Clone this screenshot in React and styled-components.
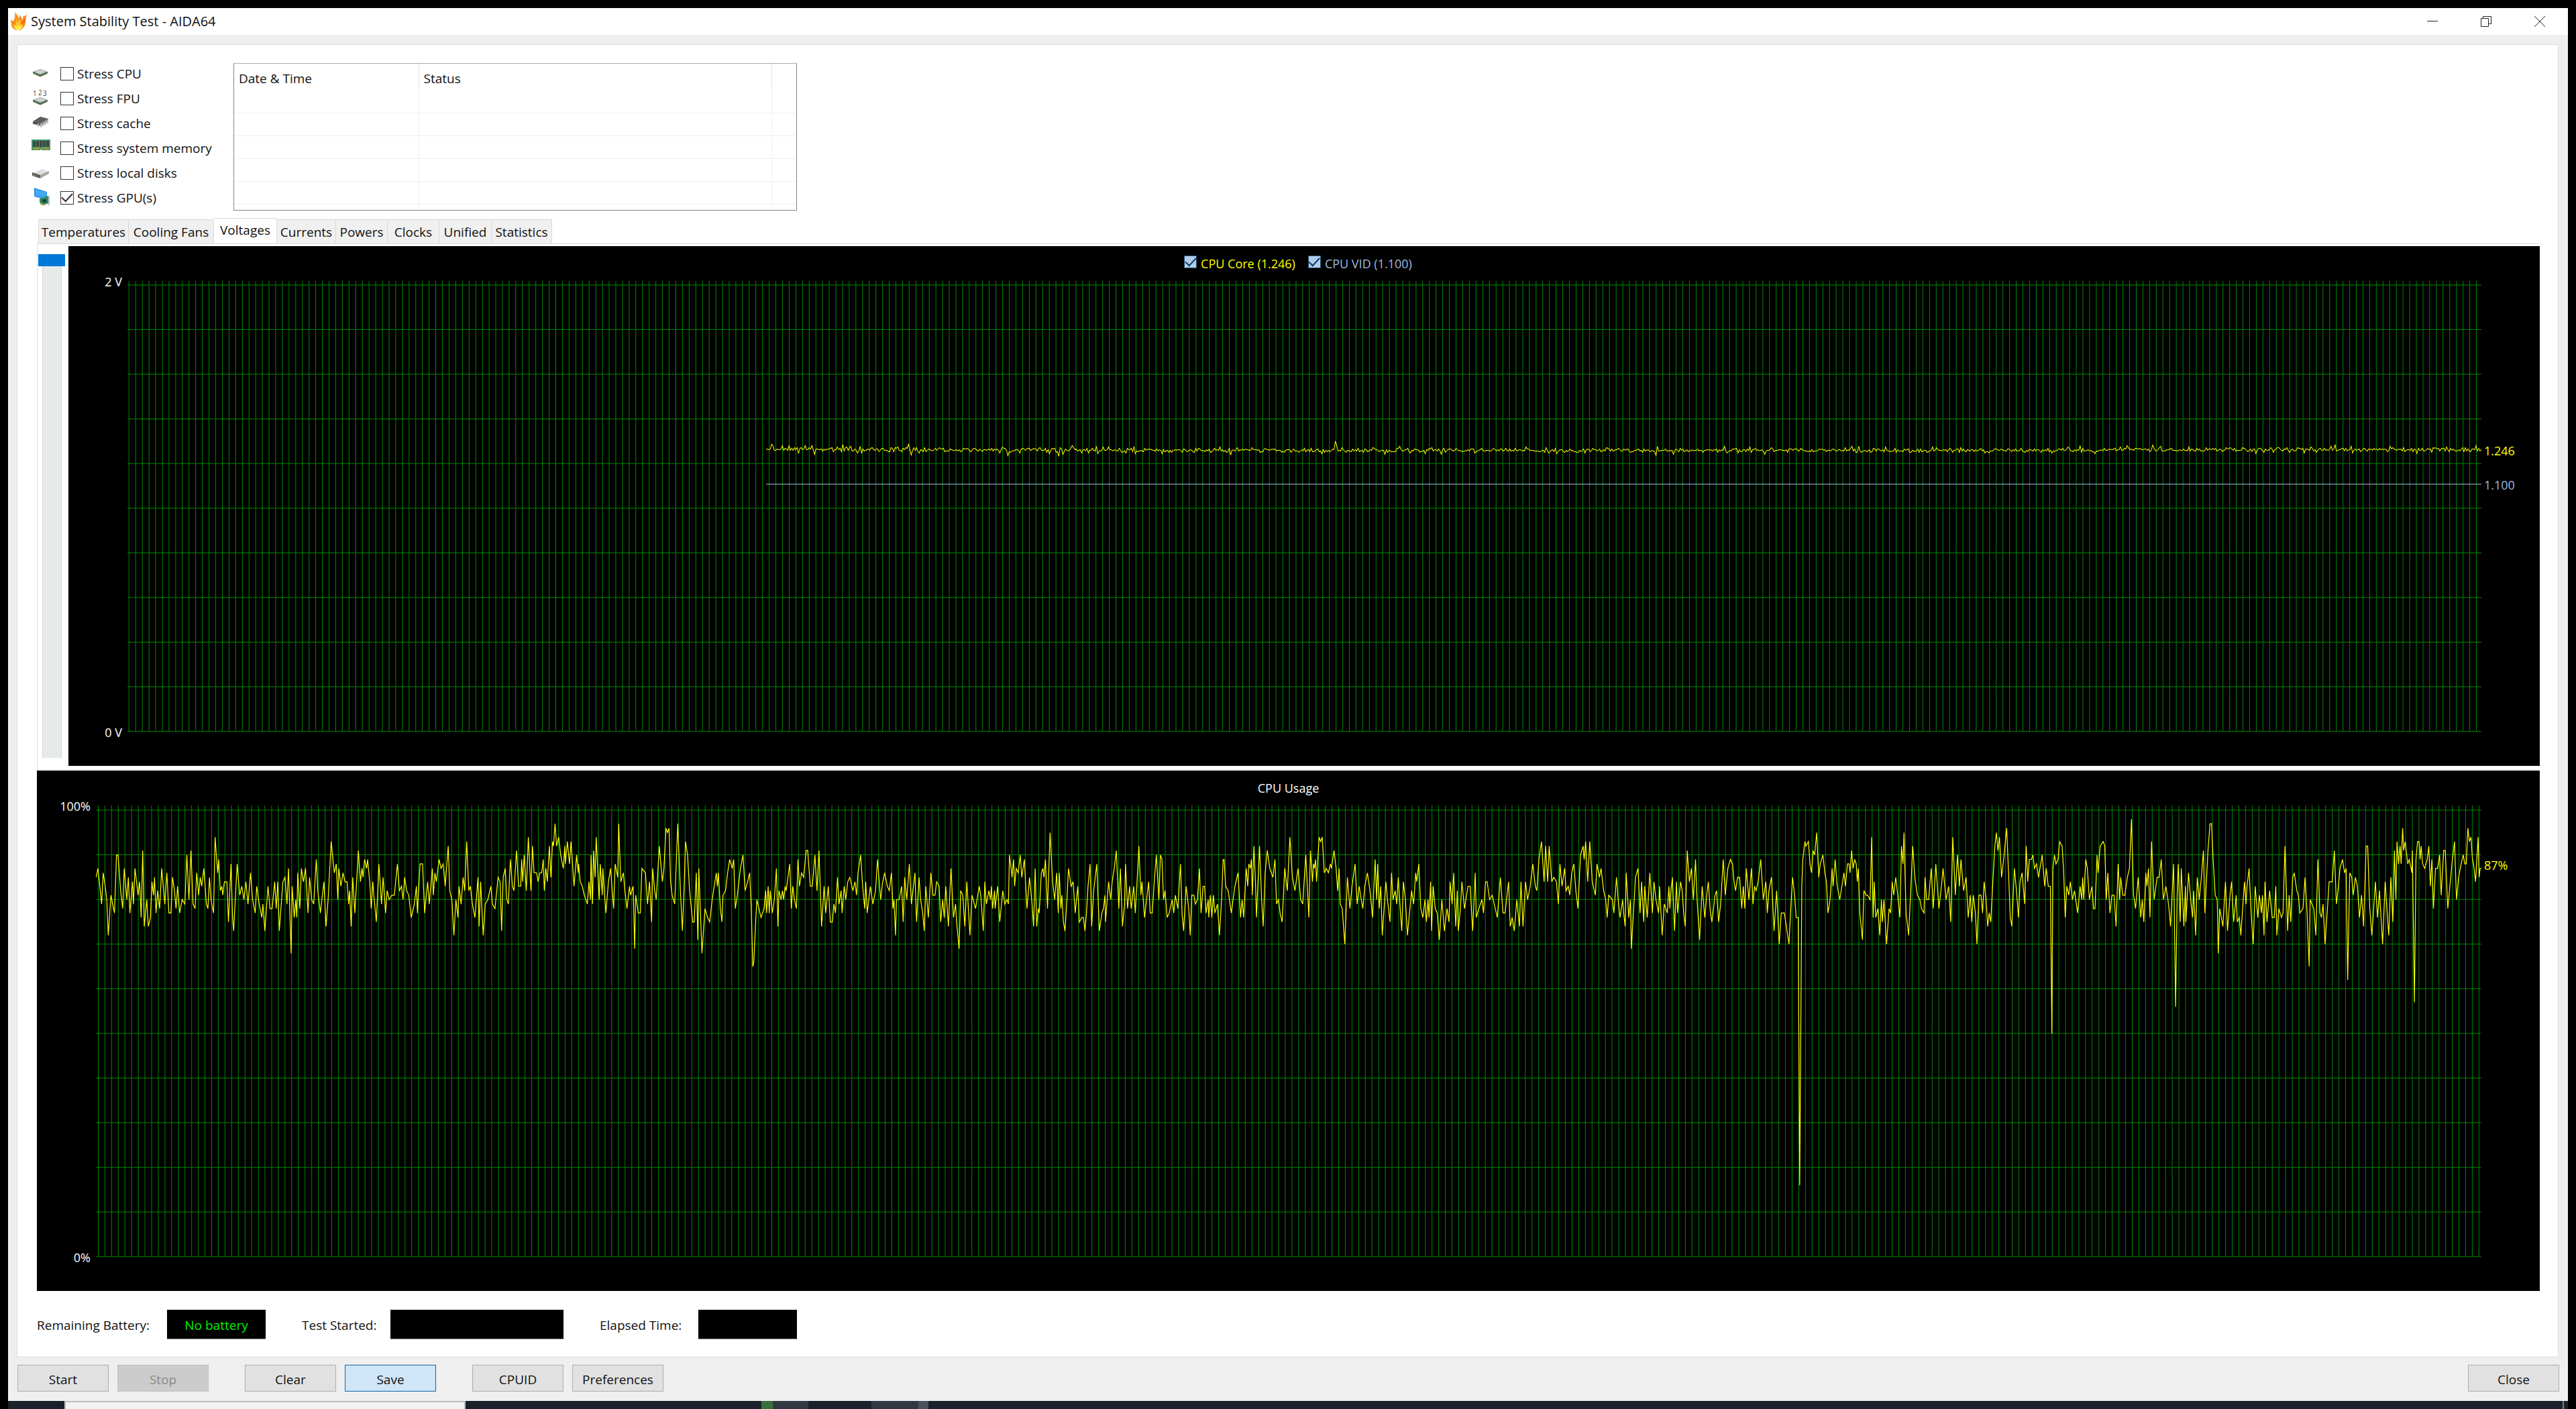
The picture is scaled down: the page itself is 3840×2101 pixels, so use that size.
import React from "react";
import styled, { createGlobalStyle, css } from "styled-components";

const GlobalStyle = createGlobalStyle`
  * { box-sizing: border-box; }
  body {
    margin: 0;
    background: #000;
    color: #111;
    font-family: "Open Sans", "Noto Sans", sans-serif;
    font-size: 19px;
    line-height: 26px;
  }
  button, input { font: inherit; color: inherit; margin: 0; }
`;

/* ---------- window frame ---------- */

const Desktop = styled.div`
  min-height: 100vh;
  display: flex;
  flex-direction: column;
  padding: 12px 12px 0;
  background: #000;
`;

const Window = styled.main`
  flex: 1;
  display: flex;
  flex-direction: column;
  background: #efefef;
`;

const TitleBar = styled.header`
  height: 40px;
  display: flex;
  align-items: center;
  padding-left: 4px;
  background: #fff;
`;

const Title = styled.h1`
  flex: 1;
  margin: 0 0 0 4px;
  font-size: 20px;
  font-weight: 400;
`;

const WindowButton = styled.button`
  width: 80px;
  height: 40px;
  padding: 0;
  display: flex;
  align-items: center;
  justify-content: center;
  border: 0;
  background: transparent;
`;

const WindowButtons = styled.div`
  display: flex;
  padding-right: 2px;
`;

const Body = styled.div`
  flex: 1;
  display: flex;
  flex-direction: column;
  padding: 14px 14px 14px 13px;
`;

const Panel = styled.section`
  flex: 1;
  display: flex;
  flex-direction: column;
  padding: 24px 27px 26px 0;
  border: 1px solid #dcdcdc;
  background: #fff;
`;

/* ---------- stress options and log ---------- */

const TopSection = styled.div`
  display: flex;
  padding-left: 20px;
  margin-bottom: 11px;
`;

const StressList = styled.ul`
  width: 302px;
  margin: 0;
  padding: 0;
  list-style: none;
`;

const StressRow = styled.li`
  height: 37px;
  display: flex;
  align-items: center;
  gap: 14px;

  label {
    display: flex;
    align-items: center;
    gap: 5px;
  }
`;

const CheckBox = styled.input`
  appearance: none;
  flex: none;
  width: ${(p) => (p.$legend ? 19 : 20)}px;
  height: ${(p) => (p.$legend ? 19 : 20)}px;
  display: grid;
  place-items: center;
  border: 1px solid ${(p) => (p.$legend ? "#27496b" : "#333")};
  background: ${(p) => (p.$legend ? "#aecdee" : "#fff")};
  ${(p) => p.$legend && css`margin-bottom: 5px;`}

  &:checked::before {
    content: "";
    width: 14px;
    height: 7px;
    margin-top: -4px;
    border-left: 2px solid ${(p) => (p.$legend ? "#17395c" : "#333")};
    border-bottom: 2px solid ${(p) => (p.$legend ? "#17395c" : "#333")};
    transform: rotate(-47deg);
  }
`;

const LogBox = styled.div`
  width: 840px;
  height: 220px;
  margin-top: 3px;
  overflow: hidden;
  border: 1px solid #828790;
  border-top-color: #a8adb3;
`;

const LogTable = styled.table`
  width: 100%;
  table-layout: fixed;
  border-collapse: collapse;

  th {
    height: 39px;
    padding: 4px 0 0 7px;
    border-right: 1px solid #e3e3e3;
    font-weight: 400;
    text-align: left;
    vertical-align: middle;
  }
  td {
    height: 34px;
    padding: 0;
    border-right: 1px solid #f0f0f0;
    border-bottom: 1px solid #efefef;
  }
  th:last-child, td:last-child { border-right: 0; }
`;

/* ---------- tabs ---------- */

const Content = styled.div`
  flex: 1;
  display: flex;
  flex-direction: column;
  padding-left: 29px;
`;

const TabList = styled.div`
  height: 38px;
  display: flex;
  align-items: flex-end;
  padding-left: 2px;
`;

const Tab = styled.button`
  width: ${(p) => p.$width}px;
  height: 36px;
  padding: 0;
  border: 1px solid #dadada;
  border-width: 1px 1px 0 0;
  background: #f0f0f0;
  text-align: center;
  white-space: nowrap;

  &:first-child { border-left-width: 1px; }
  &[aria-selected="true"] {
    height: 38px;
    padding-bottom: 4px;
    background: #fff;
  }
`;

const TabPage = styled.div`
  flex: 1 1 786px;
  display: grid;
  grid-template-columns: 46px 1fr;
  padding: 3px 0 7px;
  border-top: 1px solid #dcdcdc;
  border-left: 1px solid #dcdcdc;
`;

const RangeSlider = styled.input`
  appearance: none;
  writing-mode: vertical-lr;
  width: 40px;
  height: calc(100% - 24px);
  margin: 12px 0 0 1px;
  background: linear-gradient(90deg, transparent 6px, #d6d6d6 6px 7px, #e6eaeb 7px 34px, #d6d6d6 34px 35px, transparent 35px);

  &::-webkit-slider-thumb {
    appearance: none;
    width: 40px;
    height: 18px;
    border: 0;
    border-radius: 0;
    background: #0078d7;
  }
`;

/* ---------- charts ---------- */

const ChartFrame = styled.section`
  display: grid;
  grid-template: 51px minmax(0, 1fr) 50px / 88px minmax(0, 1fr) 87px;
  background: #000;
  color: #fff;
  font-size: 18px;
  line-height: 24px;
  ${(p) => p.$grow && css`flex: 1 1 776px;`}
`;

const ChartHeader = styled.div`
  grid-column: 1 / -1;
  display: flex;
  align-items: center;
  justify-content: center;
  gap: 19px;
  ${(p) => p.$legend && css`padding-right: 18px;`}
`;

const ChartTitle = styled.h2`
  margin: 0;
  font-size: 18px;
  font-weight: 400;
`;

const LegendItem = styled.label`
  display: flex;
  align-items: center;
  gap: 6px;
  color: ${(p) => p.$color};
`;

const Axis = styled.div`
  grid-column: 1;
  display: flex;
  flex-direction: column;
  justify-content: space-between;
  align-items: flex-end;
  margin: -10px 8px -12px 0;
`;

const PlotCell = styled.div`
  position: relative;
  min-height: 0;
`;

const PlotSvg = styled.svg`
  position: absolute;
  width: 100%;
  height: 100%;
`;

const ValueColumn = styled.div`
  position: relative;
`;

const ValueLabel = styled.span`
  position: absolute;
  left: 4px;
  transform: translateY(-50%);
  color: ${(p) => p.$color};
`;

/* ---------- status row, buttons, taskbar ---------- */

const StatusBar = styled.dl`
  display: flex;
  align-items: center;
  gap: 54px;
  margin: 28px 0 0;
`;

const StatusItem = styled.div`
  display: flex;
  align-items: center;

  dt {
    width: ${(p) => p.$labelWidth}px;
    padding-top: 2px;
    white-space: nowrap;
  }
  dd {
    width: ${(p) => p.$width}px;
    height: 44px;
    margin: 0;
    border-bottom: 1px solid #777;
    background: #000;
    color: #00f000;
    line-height: 46px;
    text-align: center;
  }
`;

const ButtonBar = styled.footer`
  display: flex;
  gap: 54px;
  margin: 11px -1px 0 1px;
`;

const ButtonGroup = styled.div`
  display: flex;
  gap: 13px;
  ${(p) => p.$end && css`margin-left: auto;`}
`;

const Button = styled.button`
  width: 136px;
  height: 40px;
  padding: 3px 0 0;
  border: 1px solid #adadad;
  background: #e1e1e1;
  text-align: center;

  &:disabled {
    border-color: #c0c0c0;
    background: #ccc;
    color: #8a8a8a;
  }
  ${(p) => p.$focused && css`
    border-color: #1067ab;
    background: #cfe5f8;
  `}
`;

const Taskbar = styled.div`
  height: 12px;
  display: flex;
  background: #1a212b;
`;

const TaskItem = styled.span`
  width: ${(p) => p.$width}px;
  margin-left: ${(p) => p.$gap}px;
  background: ${(p) => p.$color};
  ${(p) => p.$border && css`border: 2px solid #bcbcbc; border-bottom: 0;`}
  ${(p) => p.$end && css`margin: 0 6px 0 auto;`}
`;

/* ---------- chart data ---------- */

const GRID_STEP = 9.938;
const ROW_STEP = 66.58;

/* CPU load history: "column,percent" readings in three stretches of the plot. */
const USAGE = [
  { start: -3, readings: "4,85;8,87;15,79;18,86;22,83;25,80;28,72;33,81;40,77;44,90;47,90;52,82;56,78;59,87;64,80;67,85;70,77;75,84;77,79;80,87;86,81;89,84;92,76;95,91;98,74;103,80;106,74;110,76;113,84;116,81;118,85;121,77;124,82;128,78;132,87;138,79;142,86;146,77;150,77;153,85;157,82;160,78;163,83;167,77;172,80;177,79;181,90;185,80;189,91;193,79;197,78;200,86;204,81;207,85;210,83;214,87;219,79;222,78;225,85;228,80;233,77;236,94;241,86;243,89;246,82;249,83;251,81;254,84;259,84;262,75;267,88;270,76;272,73;279,88;284,81;288,83;292,80;296,84;300,79;305,86;309,80;314,77;317,83;322,79;327,76;329,79;333,73;339,83;343,78;347,78;352,84;355,78;358,84;361,73;368,84;372,85;376,79;379,87;384,68;386,83;390,76;393,80;395,76;397,86;401,78;404,87;408,84;412,87;417,77;420,85;424,80;428,79;433,89;436,82;441,77;448,84;452,74;456,80;462,93;468,86;472,88;475,80;477,87;481,83;485,86;489,84;493,84;496,79;498,82;501,74;504,85;508,77;515,91;519,84;522,87;524,85;527,89;531,87;533,89;537,84;540,78;543,84;545,81;550,75;555,88;560,79;563,85;568,77;571,82;575,80;580,81;585,81;591,88;595,82;599,83;602,80;605,85;609,82;613,81;618,76;624,79;628,83;630,77;635,88;640,88;644,77;650,84;653,79;659,87;661,81;664,86;667,84;672,89;676,87;680,88;684,83;690,92;693,82;697,80;701,72;705,80;709,76;711,83;715,79;719,85;722,82;726,93;730,82;733,83;737,79;742,76;748,85;750,74;753,84;758,72;762,79;767,80;773,83;776,79;781,78;787,85;791,84;794,73;797,85;801,87;804,80;807,79;811,89;815,83;818,82;823,91;827,83;831,83;833,89;835,84;838,90;842,82;846,94;851,82;854,92;857,86;862,86;865,84;868,86;872,86;875,89;877,82;880,87;883,84;887,92;890,85;893,93;895,92;898,97;901,92;905,94;909,90;914,87;917,92;918,88;922,93;926,88;929,93;935,83;940,90;943,86;944,88;947,84;951,83;955,81;961,79;964,84;967,80;968,90;971,79;973,91;976,85;978,94;984,80;986,88;990,81;991,87;995,80;997,77;1002,84;1006,87;1012,78;1015,88;1020,85;1022,97;1026,84;1031,86;1034,82;1038,78;1043,83;1045,81;1050,83;1053,69;1055,81;1060,77;1064,77;1067,87;1074,86;1078,79;1082,84;1086,75;1088,87;1092,82;1095,80;1101,92;1107,84;1110,87;1114,96;1117,95;1120,96;1123,84;1126,81;1131,79;1137,97;1142,82;1146,73;1150,85;1152,93;1156,90;1160,82;1166,75;1169,75;1173,86;1176,71;1178,87;1184,68;1190,78;1195,76;1199,75;1204,80;1212,86;1214,83;1216,86;1220,78;1223,75;1225,81;1230,82;1234,86;1238,89;1243,87;1246,89;1249,78;1253,81;1259,87;1264,90;1268,82;1273,84;1277,86;1280,78;1283,65;1285,66;1289,76;1291,80;1299,76;1305,78;1308,82;1310,77;1313,83;1315,77;1317,82;1321,77;1325,80;1329,87;1332,74;1334,82;1338,80;1341,82;1343,80;1346,83;1348,82;1355,88;1358,78;1361,83;1364,80;1368,78;1371,89;1374,83;1378,86;1382,85;1387,91;1390,91;1395,83;1399,83;1404,90;1408,82;1412,91;1417,74;1422,83;1425,77;1430,83;1434,75;1438,75;1441,79;1444,77;1448,85;1451,79;1455,82;1457,77;1461,83;1464,80;1468,84;1472,85;1478,82;1482,84;1485,81;1488,86;1493,90;1497,83;1501,78;1503,84;1506,77;1512,83;1517,79;1522,82;1526,89;1532,80;1536,84;1540,86;1545,83;1549,82;1553,86;1556,78;1558,80;1561,72;1563,80;1568,80" },
  { start: 1177, readings: "31,83;34,75;37,85;41,80;46,88;50,79;53,82;57,86;60,75;65,85;68,80;72,77;75,73;78,83;83,76;88,86;92,81;96,81;99,84;104,83;107,75;111,80;114,76;117,83;122,74;127,87;132,76;136,79;138,75;143,69;146,82;150,81;154,74;158,84;164,72;168,81;175,78;182,83;185,81;190,73;193,84;196,79;201,82;204,80;206,83;208,78;212,82;213,78;218,83;222,75;228,82;232,79;236,80;239,79;241,90;246,85;249,89;251,83;254,87;258,86;262,90;265,85;270,89;275,78;280,85;285,79;288,74;291,87;294,74;297,78;299,77;303,86;306,87;308,85;311,89;315,78;320,95;325,84;329,80;333,86;336,77;338,86;341,78;343,81;346,75;349,73;353,80;356,87;361,83;365,84;369,77;374,83;377,75;382,76;385,76;388,73;391,77;394,83;398,88;401,74;405,82;411,88;416,73;421,77;424,78;427,81;428,75;434,84;438,80;441,84;445,87;449,91;454,78;457,87;461,74;465,79;467,88;471,78;475,83;478,78;483,83;486,77;489,83;493,92;497,81;499,84;504,76;508,80;512,84;515,77;519,77;523,84;527,90;532,80;535,90;538,89;541,80;544,82;548,76;552,77;558,80;561,77;564,81;569,78;574,88;577,77;580,73;585,83;590,78;593,72;596,81;600,81;603,79;607,80;611,87;614,77;618,83;621,83;624,77;628,80;629,76;632,81;635,76;638,81;641,77;646,79;650,72;654,80;657,89;659,89;662,83;667,82;673,77;680,83;686,86;691,76;694,80;697,76;702,87;705,83;707,88;710,87;712,89;714,81;717,92;720,84;722,76;728,92;732,80;735,74;739,86;743,91;748,87;754,85;758,89;761,79;765,80;768,77;772,75;777,87;782,82;787,94;792,85;797,82;803,87;808,80;812,79;818,90;824,76;827,91;831,84;833,88;835,87;837,89;839,84;841,88;844,94;847,93;850,94;854,86;858,87;862,86;866,88;868,87;873,91;877,87;880,82;883,87;885,79;889,78;894,70;899,85;904,78;908,83;914,88;918,79;922,83;926,80;929,78;933,83;938,86;943,82;948,76;953,89;956,80;958,88;961,78;964,83;967,72;971,79;974,84;977,80;982,75;985,86;988,80;992,82;995,79;998,85;1003,76;1005,73;1008,84;1012,80;1016,72;1020,77;1024,82;1028,79;1032,86;1034,84;1038,88;1042,78;1046,76;1050,80;1053,75;1056,80;1058,76;1061,84;1063,73;1066,83;1070,78;1074,77;1078,71;1083,80;1088,73;1093,78;1097,75;1099,84;1103,79;1106,86;1110,74;1113,82;1115,73;1119,78;1122,84;1127,78;1134,83;1138,83;1143,73;1148,86;1150,76;1155,78;1161,80;1164,77;1168,84;1171,84;1176,80;1181,81;1187,78;1191,76;1197,85;1202,77;1206,77;1213,84;1216,74;1220,76;1224,73;1229,80;1234,74;1237,84;1241,74;1246,84;1250,80;1255,83;1260,88;1265,83;1268,82;1272,89;1277,93;1282,84;1285,92;1289,84;1292,92;1297,84;1301,85;1306,84;1310,79;1313,88;1317,83;1322,87;1325,82;1329,83;1332,81;1336,86;1340,88;1344,82;1348,78;1353,90;1358,92;1360,89;1363,93;1367,84;1371,93;1376,84;1382,81;1385,88;1390,85;1393,87;1398,82;1402,80;1405,76;1408,81;1415,80;1418,77;1423,85;1427,79;1430,76;1435,80;1437,77;1440,74;1442,86;1447,76;1450,80;1452,69;1456,77;1460,85;1465,87;1469,77;1472,84;1476,75;1478,83;1483,76;1488,86;1493,77;1496,84;1500,80;1505,77;1507,83;1512,72;1516,79;1522,77;1525,83;1527,78;1529,82;1532,85;1536,73;1540,84" },
  { start: 2357, readings: "0,77;6,84;9,82;12,77;15,74;19,91;23,84;27,87;31,80;35,89;38,80;43,71;48,83;53,76;57,81;60,84;64,77;67,75;73,81;76,82;80,75;84,79;89,89;93,81;98,87;103,89;107,88;110,84;113,82;117,85;121,85;125,78;128,83;131,78;134,87;139,80;144,87;147,79;150,83;153,82;157,84;162,89;167,80;172,84;175,77;178,82;183,85;188,73;193,82;198,70;202,77;208,77;212,74;217,70;220,77;224,85;228,81;231,76;235,76;238,16;242,83;244,89;248,93;250,92;255,93;258,88;261,86;264,91;267,90;271,95;275,85;278,88;283,90;287,86;290,84;293,77;297,80;301,87;303,83;307,89;311,83;316,80;320,83;324,86;327,83;331,88;334,88;336,86;339,91;342,87;345,89;348,88;350,84;352,87;355,77;360,71;363,82;367,81;370,81;375,80;378,94;381,76;383,84;386,76;390,78;394,72;397,80;399,75;402,80;407,70;412,78;415,77;418,84;421,81;425,85;428,82;433,76;436,92;439,88;441,95;445,77;450,72;455,84;458,92;462,85;467,81;472,80;475,78;480,77;482,85;485,80;489,80;494,87;498,78;503,88;509,78;513,82;517,87;523,80;528,83;532,75;536,94;541,81;545,90;549,83;552,89;557,82;562,85;566,76;570,81;573,75;576,81;580,77;583,70;587,81;591,81;594,77;597,84;601,80;604,74;607,77;610,75;614,84;618,92;621,95;624,91;627,94;631,85;635,89;641,96;645,85;648,76;651,74;656,87;660,82;664,76;667,84;671,86;676,79;679,92;682,84;685,89;689,89;692,90;695,87;699,88;703,85;710,90;715,83;718,87;722,83;726,83;729,50;731,87;734,90;737,88;741,89;744,93;749,92;752,86;755,76;758,83;762,81;765,84;769,80;773,82;779,77;784,83;787,80;789,85;791,80;795,89;798,87;802,80;807,83;810,78;813,78;817,90;819,86;823,92;829,93;832,92;835,80;838,86;842,77;846,81;850,81;854,74;858,88;861,80;863,85;867,81;871,81;876,85;880,87;884,98;888,81;892,78;897,85;902,76;905,80;908,75;912,86;914,83;917,87;920,76;923,93;928,80;934,85;938,85;942,89;946,80;951,83;955,80;958,77;960,74;966,88;970,56;973,81;975,88;979,75;981,87;986,74;989,83;990,75;995,86;1000,79;1003,76;1005,82;1009,72;1012,85;1016,80;1020,85;1024,91;1027,77;1033,91;1037,97;1040,97;1043,89;1047,81;1051,80;1053,68;1056,78;1062,74;1067,84;1071,73;1076,81;1079,84;1083,75;1088,81;1090,75;1094,76;1097,72;1101,79;1104,84;1107,79;1109,83;1113,87;1117,77;1121,70;1125,83;1130,76;1133,81;1137,77;1139,81;1142,72;1144,84;1148,75;1153,82;1158,76;1162,76;1165,83;1167,72;1171,78;1176,76;1179,77;1183,92;1188,73;1191,81;1194,75;1198,85;1201,86;1206,82;1209,81;1212,77;1218,78;1222,85;1226,77;1230,65;1232,80;1239,78;1243,72;1247,89;1251,77;1254,76;1257,79;1261,70;1265,77;1269,84;1275,84;1279,91;1283,79;1287,83;1290,87;1295,89;1299,86;1302,87;1305,62;1309,86;1313,85;1316,81;1320,85;1324,83;1328,76;1332,81;1336,74;1341,92;1344,92;1348,78;1352,72;1355,77;1359,84;1363,76;1367,82;1370,76;1373,70;1378,84;1382,77;1385,72;1389,85;1393,75;1396,91;1399,80;1401,93;1404,88;1407,92;1409,88;1412,96;1414,91;1417,93;1422,88;1425,89;1430,86;1431,91;1435,57;1438,89;1441,93;1444,93;1446,89;1448,92;1451,88;1455,87;1460,89;1463,92;1466,83;1469,89;1472,78;1476,87;1480,87;1484,90;1487,81;1492,91;1495,91;1500,78;1504,83;1508,88;1513,93;1517,80;1521,85;1526,88;1530,90;1533,88;1536,88;1539,96;1542,93;1545,94;1548,89;1550,88;1554,84;1559,94;1561,85;1563,87;1565,87" },
];

const USAGE_PATH = "M" + USAGE.flatMap(({ start, readings }) =>
  readings.split(";").map((reading) => {
    const [column, percent] = reading.split(",").map(Number);
    return `${(start + column / 1.3067).toFixed(1)} ${(8.3 + (100 - percent) * 6.658).toFixed(1)}`;
  })
).join("L");

/* Core voltage: a steady level with small ripple and a few larger swings. */
const SWINGS = { 4: -7, 5: -5, 12: -5, 17: -5, 57: -7, 108: 8, 180: 9, 218: 10, 228: -7, 229: -4, 424: -13, 425: -8, 480: 4, 610: 4, 834: -5, 1210: -5, 1274: -6 };

const coreVoltagePath = () => {
  let seed = 7;
  const random = () => {
    seed = (seed * 16807) % 2147483647;
    return seed / 2147483647;
  };
  const points = [];
  for (let i = 0; i <= 1278; i += 1) {
    const level = 251 + 2 * Math.min(1, i / 300) - (i > 1000 ? 1 : 0);
    const ripple = (random() + random() + random() - 1.5) * (random() > 0.75 ? 6 : 3);
    points.push(`${952 + i * 2} ${Math.round(level + (SWINGS[i] ?? ripple))}.5`);
  }
  return "M" + points.join("L");
};
const CORE_PATH = coreVoltagePath();

function Plot({ label, width, height, firstColumn, columns, firstRow, children }) {
  const bottom = firstRow + 10 * ROW_STEP;
  return (
    <PlotCell>
      <PlotSvg viewBox={`0 0 ${width} ${height}`} preserveAspectRatio="none" role="img" aria-label={label} fill="none">
        <g stroke="#008a00">
          {Array.from({ length: columns }, (_, i) => {
            const x = firstColumn + i * GRID_STEP;
            return <line key={i} x1={x} x2={x} y1="1" y2={bottom} />;
          })}
          {Array.from({ length: 11 }, (_, i) => {
            const y = firstRow + i * ROW_STEP;
            return <line key={i} x1="0" x2={width} y1={y} y2={y} />;
          })}
        </g>
        {children}
      </PlotSvg>
    </PlotCell>
  );
}

/* ---------- icons ---------- */

const FlameIcon = () => (
  <svg width="26" height="30" viewBox="0 0 26 30" aria-hidden="true">
    <path d="M6 1c3 3 5 6 6 10 1-2 1-4 0-6 3 2 5 5 5 8 1-1 2-3 1-5l6-3c-2 4-1 7-2 12-1 6-5 11-11 11C5 28 1 24 1 19c0-3-1-4-1-6 2 0 3 1 4 2 2-4 3-9 2-14z" fill="#f98b12" />
    <path d="M7 6c2 5 2 8 3 11 2-2 2-4 2-7 3 4 3 6 3 9 2-1 3-4 3-7 2 6 1 14-6 15-5 0-8-4-8-8 1 1 2 1 3 2 1-4 1-9 0-15z" fill="#ffc32b" />
    <path d="M5 20c2 1 3 2 4 4 1-2 2-3 2-5 2 1 2 3 3 4l3-3c0 4-2 8-6 8-3 0-6-3-6-8z" fill="#fff04a" />
    <path d="M15 18l8-10-5 13z" fill="#f4511e" opacity=".7" />
  </svg>
);

const StressIcon = ({ children }) => (
  <svg width="30" height="30" viewBox="0 0 30 30" aria-hidden="true">{children}</svg>
);

const Chip = ({ y }) => (
  <g transform={`translate(0 ${y})`}>
    <path d="M3 6l11 5 11-5v1l-11 5L3 7z" fill="#c2a468" />
    <path d="M3 4L14 0l11 4-11 5z" fill="#7d9186" />
    <path d="M3 4v2l11 5 11-5V4L14 9z" fill="#2c5743" />
    <path d="M5 4L14 .500l9 3.500L14 7.500z" fill="#ccd1ce" />
  </g>
);

const ICONS = {
  cpu: <Chip y={8} />,
  fpu: (
    <>
      <Chip y={13} />
      <text x="3" y="11" fontSize="10" fill="#444">1</text>
      <text x="11" y="10" fontSize="10" fill="#444">2</text>
      <text x="18" y="11" fontSize="10" fill="#444">3</text>
    </>
  ),
  cache: (
    <>
      <path d="M3 12l11-7 12 3-11 7z" fill="#5c5c5c" />
      <path d="M3 12v4l12 3 11-7V8l-11 7z" fill="#8a8a8a" />
      <path d="M3 12l12 3v3L3 15z" fill="#4c4c4c" />
      <path d="M11 15v5M15 15v6M19 14v5M22 12v5M25 10v5" stroke="#bdbdbd" strokeWidth="2" />
    </>
  ),
  memory: (
    <>
      <path d="M1 2h28v16H16l-1-2-1 2H1z" fill="#3c9a6c" />
      <path d="M3 4h4v9H3zM8 4h4v9H8zM13 4h4v9h-4zM18 4h4v9h-4zM23 4h4v9h-4z" fill="#444" />
      <path d="M3 14h10v3H3zM17 14h10v3H17z" fill="#a99332" />
    </>
  ),
  disk: (
    <>
      <path d="M3 15l14-6 10 4-13 6z" fill="#dedede" />
      <path d="M14 18l13-6v4l-13 7z" fill="#a6a6a6" />
      <path d="M2 14l12 4v5L2 19z" fill="#5a605a" />
      <path d="M4 18l3 1" stroke="#7ed957" />
    </>
  ),
  gpu: (
    <>
      <path d="M5 0l19 6v12L5 13z" fill="#2d8fe0" />
      <path d="M7 2l16 5v9L7 12z" fill="#42aaf5" />
      <path d="M13 16l12-4 2 2v9l-9 3-5-4z" fill="#2f8b68" />
      <path d="M17 17h6v5h-6z" fill="#25443a" />
      <path d="M27 12v14" stroke="#b9c4bf" strokeWidth="2" />
      <path d="M14 24l6 2" stroke="#d0a640" strokeWidth="2" />
    </>
  ),
};

/* ---------- content ---------- */

const STRESS = [
  ["cpu", "Stress CPU"],
  ["fpu", "Stress FPU"],
  ["cache", "Stress cache"],
  ["memory", "Stress system memory"],
  ["disk", "Stress local disks"],
  ["gpu", "Stress GPU(s)", true],
];

const TABS = [
  ["Temperatures", 135],
  ["Cooling Fans", 127],
  ["Voltages", 94],
  ["Currents", 88],
  ["Powers", 77],
  ["Clocks", 77],
  ["Unified", 78],
  ["Statistics", 90],
];

const YELLOW = "#ffff00";
const BLUE = "#9dbbe2";

export default function App() {
  return (
    <>
      <GlobalStyle />
      <Desktop>
        <Window>
          <TitleBar>
            <FlameIcon />
            <Title>System Stability Test - AIDA64</Title>
            <WindowButtons>
              <WindowButton aria-label="Minimize">
                <svg width="16" height="16"><path d="M0 7.500h16" stroke="#222" /></svg>
              </WindowButton>
              <WindowButton aria-label="Restore">
                <svg width="16" height="16" fill="none" stroke="#222"><path d="M.5 3.500h11v12H.5zM3.500 3V.5h12v11h-3.500" /></svg>
              </WindowButton>
              <WindowButton aria-label="Close window">
                <svg width="16" height="16"><path d="M0 0l16 16M16 0L0 16" stroke="#222" /></svg>
              </WindowButton>
            </WindowButtons>
          </TitleBar>
          <Body>
            <Panel>
              <TopSection>
                <StressList>
                  {STRESS.map(([id, text, checked]) => (
                    <StressRow key={id}>
                      <StressIcon>{ICONS[id]}</StressIcon>
                      <label>
                        <CheckBox type="checkbox" defaultChecked={checked} />
                        {text}
                      </label>
                    </StressRow>
                  ))}
                </StressList>
                <LogBox>
                  <LogTable>
                    <colgroup>
                      <col style={{ width: 275 }} />
                      <col style={{ width: 526 }} />
                      <col />
                    </colgroup>
                    <thead>
                      <tr><th>Date &amp; Time</th><th>Status</th><th aria-label="Spare" /></tr>
                    </thead>
                    <tbody>
                      {[0, 1, 2, 3, 4, 5].map((row) => (
                        <tr key={row}><td /><td /><td /></tr>
                      ))}
                    </tbody>
                  </LogTable>
                </LogBox>
              </TopSection>

              <Content>
                <TabList role="tablist">
                  {TABS.map(([name, width]) => (
                    <Tab key={name} role="tab" aria-selected={name === "Voltages"} $width={width}>{name}</Tab>
                  ))}
                </TabList>
                <TabPage role="tabpanel" aria-label="Voltages">
                  <RangeSlider type="range" min="0" max="100" defaultValue="0" aria-label="Vertical scale" />
                  <ChartFrame>
                    <ChartHeader $legend>
                      <LegendItem $color={YELLOW}>
                        <CheckBox $legend type="checkbox" defaultChecked />
                        CPU Core (1.246)
                      </LegendItem>
                      <LegendItem $color={BLUE}>
                        <CheckBox $legend type="checkbox" defaultChecked />
                        CPU VID (1.100)
                      </LegendItem>
                    </ChartHeader>
                    <Axis><span>2 V</span><span>0 V</span></Axis>
                    <Plot label="Voltages over time" width={3508} height={674} firstColumn={2.3} columns={353} firstRow={6.9}>
                      <path d="M952 304H3508" stroke="#a9c6ee" />
                      <path d={CORE_PATH} stroke={YELLOW} />
                    </Plot>
                    <ValueColumn>
                      <ValueLabel $color={YELLOW} style={{ top: "37.7%" }}>1.246</ValueLabel>
                      <ValueLabel $color={BLUE} style={{ top: "45.2%" }}>1.100</ValueLabel>
                    </ValueColumn>
                  </ChartFrame>
                </TabPage>
                <ChartFrame $grow>
                  <ChartHeader><ChartTitle>CPU Usage</ChartTitle></ChartHeader>
                  <Axis><span>100%</span><span>0%</span></Axis>
                  <Plot label="CPU usage over time" width={3555} height={675} firstColumn={3.5} columns={358} firstRow={8}>
                    <path d={USAGE_PATH} stroke={YELLOW} strokeWidth="1.2" />
                  </Plot>
                  <ValueColumn>
                    <ValueLabel $color={YELLOW} style={{ top: "13.4%" }}>87%</ValueLabel>
                  </ValueColumn>
                </ChartFrame>
                <StatusBar>
                  <StatusItem $labelWidth={194} $width={147}><dt>Remaining Battery:</dt><dd>No battery</dd></StatusItem>
                  <StatusItem $labelWidth={132} $width={258}><dt>Test Started:</dt><dd /></StatusItem>
                  <StatusItem $labelWidth={147} $width={147}><dt>Elapsed Time:</dt><dd /></StatusItem>
                </StatusBar>
              </Content>
            </Panel>
            <ButtonBar>
              <ButtonGroup><Button>Start</Button><Button disabled>Stop</Button></ButtonGroup>
              <ButtonGroup><Button>Clear</Button><Button $focused>Save</Button></ButtonGroup>
              <ButtonGroup><Button>CPUID</Button><Button>Preferences</Button></ButtonGroup>
              <ButtonGroup $end><Button>Close</Button></ButtonGroup>
            </ButtonBar>
          </Body>
        </Window>
        <Taskbar>
          <TaskItem $gap={84} $width={598} $color="#f2f2f2" $border />
          <TaskItem $gap={441} $width={17} $color="#37703d" />
          <TaskItem $gap={0} $width={53} $color="#303842" />
          <TaskItem $gap={94} $width={70} $color="#303842" />
          <TaskItem $gap={0} $width={15} $color="#4a525b" />
          <TaskItem $end $width={2} $color="#7c8288" />
        </Taskbar>
      </Desktop>
    </>
  );
}
